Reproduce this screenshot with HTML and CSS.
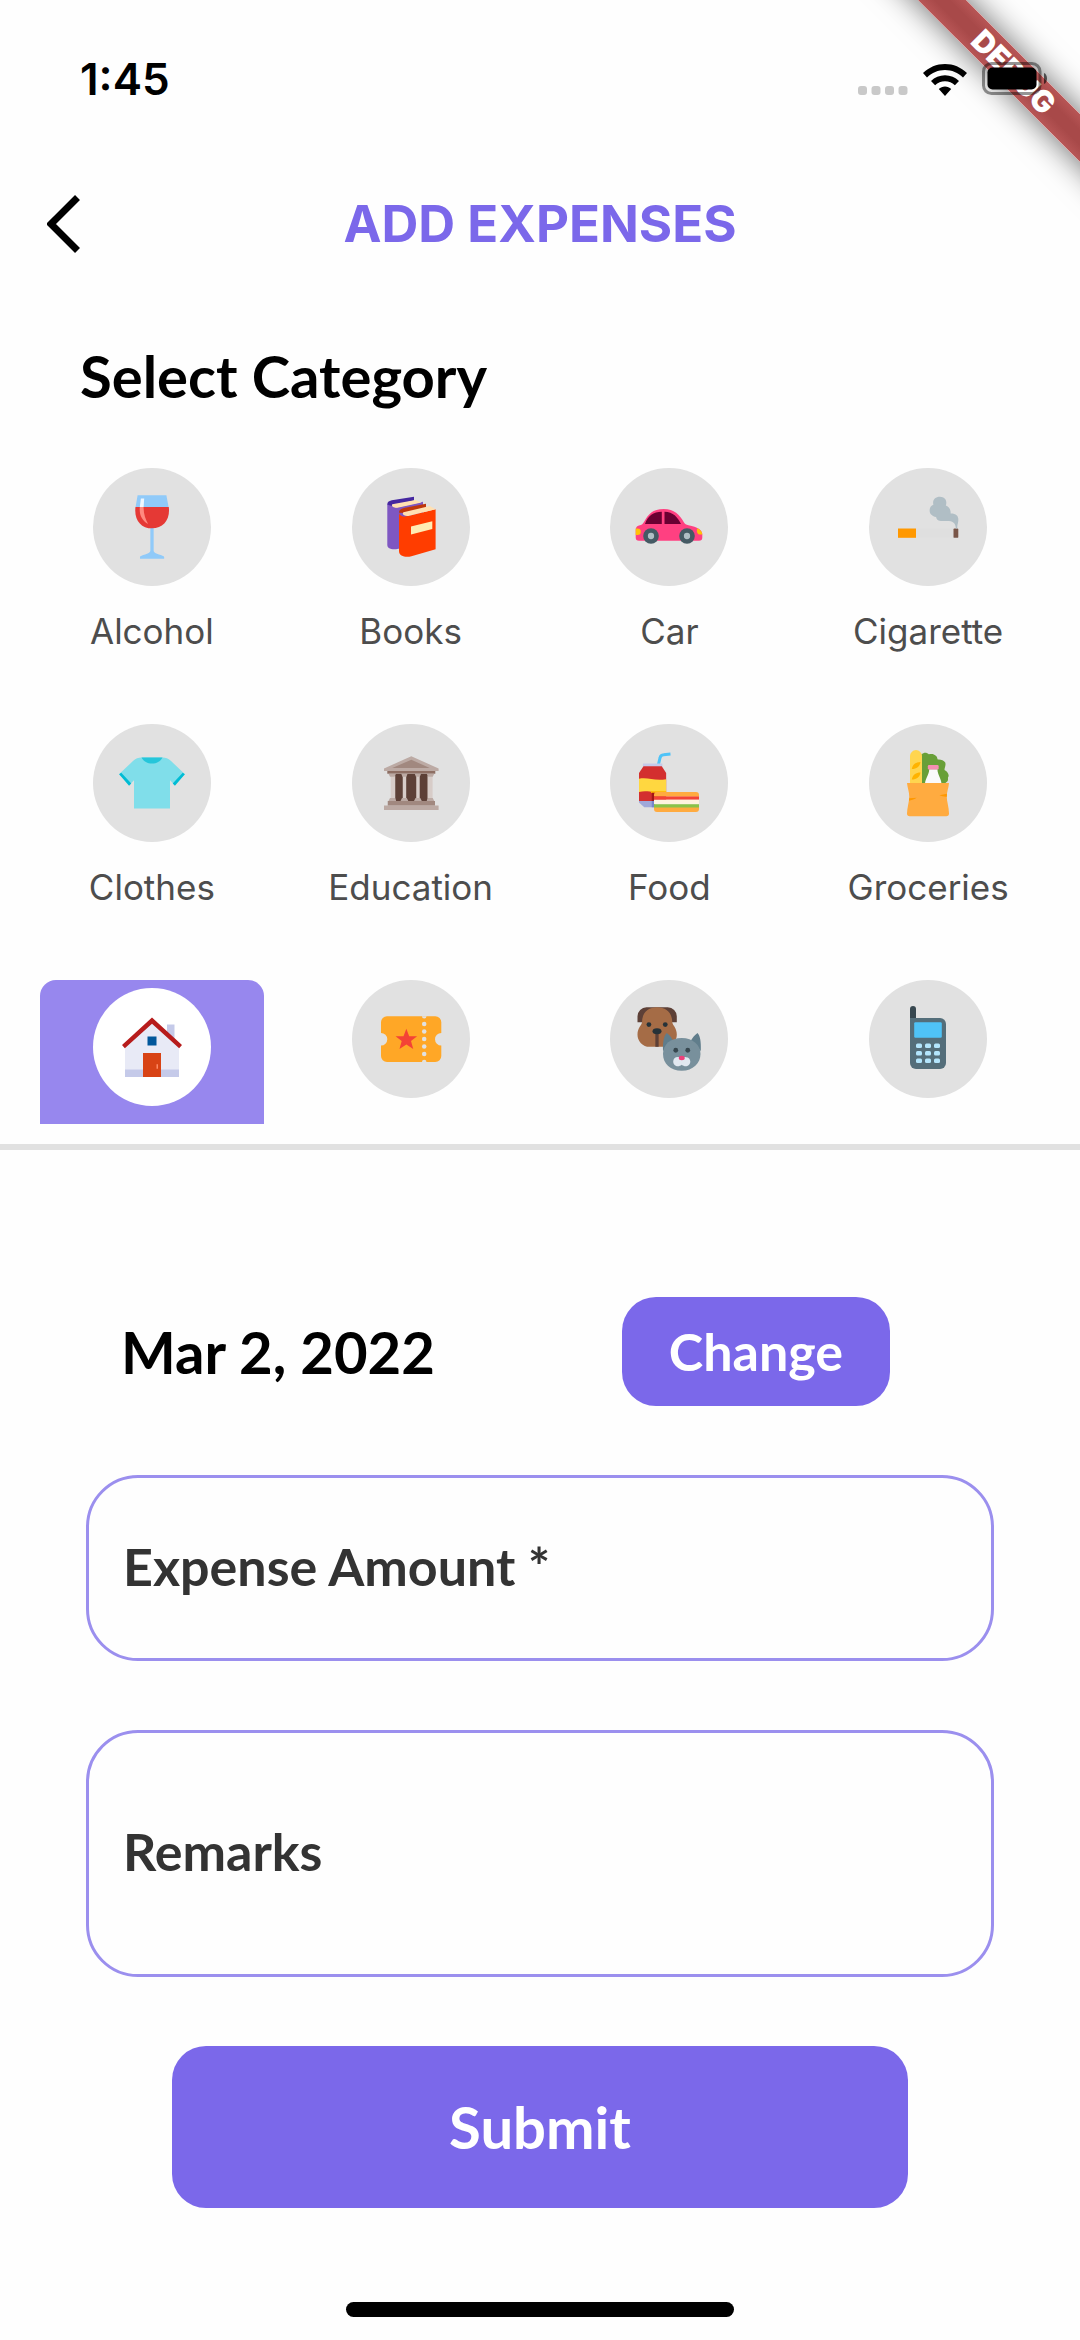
FILE: index.html
```html
<!DOCTYPE html>
<html lang="en">
<head>
<meta charset="utf-8">
<meta name="viewport" content="width=device-width, initial-scale=1">
<title>Add Expenses</title>
<link rel="stylesheet" href="styles.css">
</head>
<body>
<div class="ribbon-corner" aria-hidden="true"><div class="ribbon">DEBUG</div></div>

<div class="status">
  <span class="clock">1:45</span>
  <div class="status-icons">
    <svg class="signal" viewBox="0 0 50 10" aria-hidden="true"><g fill="#c9c9c9"><rect width="9" height="9" rx="3"/><rect x="13.500" width="9" height="9" rx="3"/><rect x="27" width="9" height="9" rx="3"/><rect x="40.500" width="9" height="9" rx="3"/></g></svg>
    <svg class="wifi" viewBox="0 0 44 32" aria-hidden="true"><path d="M22 0C13.600 0 6 3.300 0 9l4 4.400C9 8.700 15.200 6 22 6s13 2.700 18 7.400L44 9C38 3.300 30.400 0 22 0ZM22 11.200c-5.400 0-10.300 2.100-14 5.700l4.100 4.400c2.700-2.600 6.100-4.100 9.900-4.100s7.200 1.500 9.900 4.100L36 16.900c-3.700-3.600-8.600-5.700-14-5.700ZM22 22.600c-2.400 0-4.500.9-6.200 2.400L22 32l6.200-7c-1.700-1.500-3.800-2.400-6.200-2.400Z"/></svg>
    <svg class="battery" viewBox="0 0 67 34" aria-hidden="true"><rect x="1.500" y="1.500" width="56.500" height="30" rx="8" fill="none" stroke="#000" stroke-opacity=".42" stroke-width="3"/><rect x="5.500" y="5.500" width="49" height="22" rx="5"/><path d="M62 11c4 1.500 4 9.500 0 11Z" fill-opacity=".6"/></svg>
  </div>
</div>

<header class="topbar">
  <button class="back" type="button" aria-label="Back"><svg viewBox="0 0 33 58" aria-hidden="true"><path d="M30.500 2.500 4 29l26.500 26.500" fill="none" stroke="#000" stroke-width="7"/></svg></button>
  <h1>ADD EXPENSES</h1>
</header>

<main>
  <h2>Select Category</h2>
  <div class="categories">
    <button class="tile" type="button"><span class="disc"><svg viewBox="0 0 48 48"><path fill="#90CAF9" d="M14.400 2.900h19.200L35.100 11H13ZM22.900 24h2.200v16c0 2 7 2.800 7 4v1.200H16V44c0-1.200 6.900-2 6.900-4Z"/><path fill="#E53935" d="M13 10.700h22.200C36.300 19 31.500 24.900 24 24.900S11.900 19 13 10.700Z"/><path fill="#fff" opacity=".85" d="M16.600 5h2.200l-.4 5.700h-2.500Z"/><path fill="#ff8a80" d="M15.900 10.700h2.500c-.1 4.600 1.300 8.300 3 11.300-4.400-2.400-6-6.500-5.500-11.300Z"/></svg></span><span class="name">Alcohol</span></button>
    <button class="tile" type="button"><span class="disc"><svg viewBox="0 0 48 48"><path fill="#7E57C2" d="M8.200 8.500 14 11l18-3.800v28L14 38.900c-3 0-5.800-.6-5.800-2.900Z"/><path fill="#4527A0" d="M8.200 9c0-1.600.8-2.200 3-2.800L26 3.900v2.500L11 10Z"/><path fill="#FFE0B2" d="M11.500 8.800 27 6l4 1.600-16 3.600c-2 .3-4.500-1-3.500-2.400Z"/><path fill="#FF3D00" d="M16 14c0 2.500 2.500 3.500 6 2.700l18.400-4.500v26.700L24.300 43.500c-3.500 1-8.300.2-8.300-3.500Z"/><path fill="#BF360C" d="M16 14.500c0-2 1.200-2.600 4-3.300L34 8.500v2.600l-14.500 3.600Z"/><path fill="#FFE0B2" d="M19 14.200 36.500 10l3.900 2.200-18.200 4.400c-2.200.4-4.700-1.200-3.200-2.400Z"/><path fill="#FFECB3" d="m24 23.700 14.200-3.600v5.200L24 29Z"/></svg></span><span class="name">Books</span></button>
    <button class="tile" type="button"><span class="disc"><svg viewBox="0 0 48 48"><path fill="#FF4081" d="M4 23c2-.4 2.600-1 3.500-2.600C10.200 15.600 13 12 20.500 12c7 0 10.500 3.600 13.500 9 .6 1 1.400 1.500 3 1.800 6 1.200 9.200 3.200 9.200 6V31a2.200 2.200 0 0 1-2.200 2.200H4A2.200 2.200 0 0 1 1.800 31v-5c0-1.800.8-2.700 2.200-3Z"/><path fill="#6A0032" d="M8 22c2-5.600 5.500-8.200 11.200-8.200V22ZM21 13.800c5.800.2 8.800 3.500 11 8.200H21Z"/><path fill="#FFC107" d="M1.800 25H3a2.200 2.200 0 0 1 0 4.400H1.800ZM43 24.800c2 1 3.200 2.300 3.200 4.200h-1.600c-1.800 0-2.500-2.400-1.600-4.200Z"/><g fill="#455A64"><circle cx="12" cy="30" r="5.200"/><circle cx="36" cy="30" r="5.200"/></g><g fill="#B0BEC5"><circle cx="12" cy="30" r="2.100"/><circle cx="36" cy="30" r="2.100"/></g></svg></span><span class="name">Car</span></button>
    <button class="tile" type="button"><span class="disc"><svg viewBox="0 0 48 48"><path fill="#DFDFDF" d="M16 25h25v6H16z"/><path fill="#FF9800" d="M4 25h12v6.200H4z"/><rect x="41" y="25" width="3.200" height="6.200" rx=".6" fill="#795548"/><path fill="#B0BEC5" d="M42.600 25c-.2-3-1.300-4.700-4.600-5-4 0-8 .8-8.600-2.700-2.700-.4-4.500-2.200-4.300-4.700.1-2 1.100-3 2.500-3.500C26.700 6 29 3.800 32 3.900c3.300.1 5 2.600 3.900 5.800 2 .9 3.300 2.300 3.200 5.300 4 0 5.300 2 5.100 4.500-.1 2.300-.7 2.500-.7 5.500Z"/></svg></span><span class="name">Cigarette</span></button>

    <button class="tile" type="button"><span class="disc"><svg viewBox="0 0 48 48"><path fill="#80DEEA" d="M17 7h14c2.300 0 3.700.7 5.500 2.200l9.500 9-7 7-3-3V41H12V22.200l-3 3-7-7 9.500-9C13.300 7.700 14.700 7 17 7Z"/><path fill="#00BCD4" d="m3.500 17.200 6.700 7.200-1.500 1.500-6.600-7.700ZM44.500 17.200l-6.700 7.200 1.500 1.500 6.600-7.700Z"/><path fill="#26C6DA" d="M17 7h14c-1.500 2.800-4 4-7 4s-5.500-1.200-7-4Z"/></svg></span><span class="name">Clothes</span></button>
    <button class="tile" type="button"><span class="disc"><svg viewBox="0 0 48 48"><path fill="#5D4037" d="M12 18h24v18H12z"/><path fill="#BCAAA4" d="M6 42v-3h36.400v3ZM6 14.300 24.200 6.200l18.200 8.100V16H6Z"/><path fill="#A1887F" d="M8.500 36H40v3H8.500ZM24.200 8.500 36.500 14h-25Z"/><path fill="#8D6E63" d="M8.200 16h32v1.900h-32z"/><path fill="#D7CCC8" d="M10.500 19h3v15h-3ZM18.500 19h2.300v15h-2.300ZM27.500 19h2.300v15h-2.300ZM35 19h3.400v15H35Z"/><path fill="#BCAAA4" d="M9 17.900h5l-1 2h-3ZM17.500 17.900h4.200l-.8 2h-2.600ZM26.500 17.900h4.200l-.8 2h-2.600ZM34.500 17.900h5l-1 2h-3ZM9 36l1-2h3.600l.5 2ZM17 36l1-2h3.200l1 2ZM26 36l1-2h3.200l1 2ZM34.500 36l.5-2h3.500l1 2Z"/></svg></span><span class="name">Education</span></button>
    <button class="tile" type="button"><span class="disc"><svg viewBox="0 0 48 48"><path fill="none" stroke="#4FC3F7" stroke-width="2" d="m17 11.500 1-4.200c.3-1.500 1-2 2.400-2.100L25 4.700"/><path fill="#C5CAE9" d="M6.600 11h13v2.200h-13z"/><path fill="#D32F2F" d="M7 12.800h12.200l2.900 4.600V36H4V17.400Z"/><path fill="#FFD740" d="M4 21.200c6-1.400 10 1.800 18.100.3V30H4Z"/><path fill="#D32F2F" d="M4 30c3.500-1 7-.4 10.200.2v6H4Z"/><path fill="#9FA8DA" d="M4 36h10.200v4.200H7.500L4 37Z"/><path fill="#FFB300" d="M12 29.500h10.100v1.200H12z"/><path fill="#A31515" d="M12.500 30.500h2V36h-2z"/><path fill="#7986CB" d="M12.500 36h2v4.200h-2z"/><path fill="#FFAB40" d="M14 33v-1a2 2 0 0 1 2-2h26a2 2 0 0 1 2 2v1.200ZM14 40h30v1.300a2 2 0 0 1-2 2H16a2 2 0 0 1-2-2Z"/><path fill="#F44336" d="M14 33h30v2.100H14z"/><path fill="#FFF3E0" d="M14 35.100h30v3.100H14z"/><path fill="#8BC34A" d="M14 38.200h30v2.200H14z"/></svg></span><span class="name">Food</span></button>
    <button class="tile" type="button"><span class="disc"><svg viewBox="0 0 48 48"><path fill="#689F38" d="M19.500 5c2-1.500 3.500-1.400 5-.1 2-.6 3.500-.3 4.500.8 1 .5 1 1.500 1.500 2.600 2-.2 4 .5 5 2 .6 2-.5 3.500-.5 5 2 1 2.700 2.500 2.800 4-1 1.500 0 2-.8 3.500L34.500 25h-15Z"/><path fill="#FFD54F" d="M12 25V6c0-2 2-4 4-4s4 2 4 4v19Z"/><path fill="#FFB300" d="M13.200 14.700c.5-3 2.700-4.700 5.800-4.700-.3 3-3 4.800-5.800 4.700ZM13.200 21.700c.5-3 2.700-4.700 5.800-4.700-.3 3-3 4.800-5.800 4.700Z"/><path fill="#FAFAFA" d="M24.800 14.800h5.500c0 3.700 2.500 6 2.700 9.700H22c.2-3.700 2.800-6 2.800-9.700Z"/><rect x="23.900" y="12" width="7.200" height="3" rx=".8" fill="#F48FB1"/><path fill="#FFAB40" d="M10 24h28c-.3 3.500-1.500 6-1.500 9 0 3.500 1.500 7 1.500 11.400a1.800 1.800 0 0 1-1.800 1.800H11.800a1.800 1.800 0 0 1-1.800-1.800c0-3.500 1.500-7.900 1.500-11.400S10.300 27.500 10 24Z"/><path fill="#FF9800" d="m11.500 34.100 5-.2c-2 1.500-3.500 1.500-5.200 2ZM36.600 31.200l-5 1c1.500.7 3.500 1 5 .9Z"/></svg></span><span class="name">Groceries</span></button>

    <button class="tile selected" type="button" aria-pressed="true"><span class="disc"><svg viewBox="0 0 48 48"><path fill="#C5CAE9" d="M34 9h5v15h-5z"/><path fill="#E8EAF6" d="M24 5.500 42 22v22H6V22Z"/><path fill="#C5CAE9" d="M6 39h36v5H6z"/><path fill="#B71C1C" d="M24 4.300 4 22.700l1.900 2.200L24 8.500l18.100 16.400 1.900-2.200Z"/><path fill="#D84315" d="M18 28h12v16H18z"/><path fill="#01579B" d="M21 17h6v6h-6z"/><path fill="#FF8A65" d="M27 35.500h1v3h-1z"/></svg></span><span class="name">Home</span></button>
    <button class="tile" type="button" aria-label="Movies"><span class="disc"><svg viewBox="0 0 48 48"><path fill="#FFA726" d="M8 8.800h32.200a4 4 0 0 1 4 4V20a4.200 4.200 0 0 0 0 8.400v7a4 4 0 0 1-4 4H8a4 4 0 0 1-4-4v-7A4.200 4.200 0 0 0 4 20v-7.200a4 4 0 0 1 4-4Z"/><path fill="#F44336" d="m20.900 17.200 1.900 5h5.300L24 25.400l1.500 5.300-4.600-3.100-4.600 3.100 1.500-5.300-4.100-3.200H19Z"/><g fill="#E1E1E1"><path d="M31.300 8.800h3a1.500 1.500 0 0 1-3 0ZM31.300 39.400h3a1.500 1.500 0 0 0-3 0Z"/><circle cx="32.800" cy="14" r="1.500"/><circle cx="32.800" cy="19" r="1.500"/><circle cx="32.800" cy="24" r="1.500"/><circle cx="32.800" cy="29" r="1.500"/><circle cx="32.800" cy="34" r="1.500"/></g></svg></span></button>
    <button class="tile" type="button" aria-label="Pets"><span class="disc"><svg viewBox="0 0 48 48"><path fill="#5D4037" d="M9 2.900h14.200a6 6 0 0 1 6 6v3.900H3V8.900a6 6 0 0 1 6-6Z"/><path fill="#A56C46" d="M6 13C6 6.500 10 2.900 16 2.900S26.200 6.500 26.200 13c.5 2.300 3 3.700 3 8a8 8 0 0 1-8 8.200H11A8 8 0 0 1 3 21c0-4.300 2.500-5.700 3-8Z"/><path fill="#5D4037" d="M14.900 20h2.200v9.200h-2.200z"/><g fill="#263238"><ellipse cx="16" cy="18.800" rx="3" ry="2"/><circle cx="10.600" cy="14.400" r="1.600"/><circle cx="21.500" cy="14.400" r="1.600"/></g><path fill="#607D8B" d="M20 32c-.2-6 .5-10 2.500-12 2 1.200 3.500 3.500 4.500 6ZM45.200 32c.2-6-.3-10-2.200-12-2 1.500-3.200 3-4.700 5.500Z"/><path fill="#78909C" d="M32.500 23.300C40 23.300 45 28 45 34s-5 11.200-12.500 11.200S20 40.500 20 34s5-10.700 12.500-10.700Z"/><g fill="#37474F"><circle cx="28.500" cy="31.500" r="1.600"/><circle cx="36.500" cy="31.500" r="1.600"/></g><path fill="#E1E8F0" d="M29.800 36c1.500 0 5 0 5.500.1 1.800 0 2.900 1.400 2.900 2.900 0 3-3.400 4.200-5.700 2.200-2.300 2-5.700.8-5.700-2.200 0-1.700 1.200-3 3-3Z"/><ellipse cx="32.500" cy="36.700" rx="2" ry="1.500" fill="#EC407A"/></svg></span></button>
    <button class="tile" type="button" aria-label="Phone"><span class="disc"><svg viewBox="0 0 48 48"><path fill="#37474F" d="M12 14V4a2 2 0 0 1 4 0v10Z"/><path fill="#546E7A" d="M12 10h20a4 4 0 0 1 4 4v26a4 4 0 0 1-4 4H16a4 4 0 0 1-4-4Z"/><rect x="14.800" y="12.800" width="18.400" height="10.300" rx=".8" fill="#4FC3F7"/><g fill="#B3E5FC"><rect x="16" y="27" width="4" height="3" rx="1"/><rect x="22" y="27" width="4" height="3" rx="1"/><rect x="28" y="27" width="4" height="3" rx="1"/><rect x="16" y="32" width="4" height="3" rx="1"/><rect x="22" y="32" width="4" height="3" rx="1"/><rect x="28" y="32" width="4" height="3" rx="1"/><rect x="16" y="37" width="4" height="3" rx="1"/><rect x="22" y="37" width="4" height="3" rx="1"/><rect x="28" y="37" width="4" height="3" rx="1"/></g></svg></span></button>
  </div>

  <form class="entry">
    <div class="date-row">
      <time datetime="2022-03-02">Mar 2, 2022</time>
      <button class="change" type="button">Change</button>
    </div>
    <input class="field" type="text" inputmode="decimal" aria-label="Expense Amount" placeholder="Expense Amount *">
    <input class="field tall" type="text" aria-label="Remarks" placeholder="Remarks">
    <button class="submit" type="button">Submit</button>
  </form>
</main>
<div class="home-bar"></div>
</body>
</html>
```
FILE: styles.css
```css
:root {
  --violet: #7b68ea;
  --violet-soft: #9787ee;
  --grey: #e1e1e1;
}

* {
  box-sizing: border-box;
}

body {
  position: relative;
  display: flex;
  flex-direction: column;
  min-height: 100vh;
  margin: 0;
  background: #fefefe;
  color: #000;
  font-family: Inter, "Liberation Sans", sans-serif;
}

button {
  padding: 0;
  border: 0;
  background: none;
  color: inherit;
  font: inherit;
}

svg {
  display: block;
}

.ribbon-corner {
  position: absolute;
  top: 0;
  right: 0;
  width: 240px;
  height: 240px;
  overflow: hidden;
}

.ribbon {
  position: absolute;
  top: 52px;
  right: -131px;
  width: 400px;
  height: 34px;
  padding-left: 8px;
  background: linear-gradient(#b85656, #a84949 35%, #a84949 65%, #b85656);
  box-shadow: 0 0 32px rgba(0, 0, 0, 0.6);
  color: #fff;
  font-size: 30px;
  font-weight: 900;
  line-height: 34px;
  text-align: center;
  transform: rotate(45deg);
}

.status {
  position: relative;
  display: flex;
  align-items: center;
  justify-content: space-between;
  height: 158px;
  padding: 0 31px 0 80px;
}

.clock {
  font-size: 44px;
  font-weight: 600;
}

.status-icons {
  display: flex;
  align-items: flex-end;
  gap: 15px;
}

.signal {
  width: 50px;
  height: 10px;
}

.wifi {
  width: 44px;
  height: 32px;
}

.battery {
  width: 67px;
  height: 34px;
}

.topbar {
  display: grid;
  grid-template-columns: 80px 1fr 80px;
  align-items: center;
  height: 132px;
}

.back {
  padding-left: 47px;
}

.back svg {
  width: 33px;
  height: 58px;
}

h1 {
  margin: 0;
  color: var(--violet);
  font-size: 51px;
  font-weight: 700;
  line-height: 64px;
  text-align: center;
}

main {
  display: flex;
  flex: 1;
  flex-direction: column;
}

h2,
time {
  margin: 0;
  font-family: Lato, sans-serif;
  font-size: 58px;
  font-weight: 700;
  line-height: 72px;
}

h2 {
  padding: 50px 80px 56px;
}

.categories {
  display: grid;
  grid-template-columns: repeat(4, 1fr);
  grid-auto-rows: 220px;
  gap: 36px 35px;
  height: 656px;
  margin: 0 40px;
  overflow: hidden;
}

.tile {
  display: flex;
  flex-direction: column;
  align-items: center;
  gap: 24px;
  border-radius: 16px;
  color: #4d4d4d;
  font-size: 35px;
  line-height: 42px;
}

.disc {
  display: grid;
  place-items: center;
  width: 118px;
  height: 118px;
  border-radius: 50%;
  background: var(--grey);
}

.disc svg {
  width: 72px;
  height: 72px;
}

.selected {
  gap: 10px;
  padding-top: 8px;
  background: var(--violet-soft);
  color: #fff;
}

.selected .disc {
  background: #fff;
}

.entry {
  display: flex;
  flex-direction: column;
  gap: 69px;
  margin-top: 20px;
  padding: 147px 86px 0;
  border-top: 6px solid var(--grey);
  font-family: Lato, sans-serif;
}

.date-row {
  display: flex;
  align-items: center;
  justify-content: space-between;
  padding: 0 104px 0 35px;
}

.change,
.submit {
  border-radius: 34px;
  background: var(--violet);
  color: #fff;
  font-weight: 700;
}

.change {
  padding: 22px 47px 23px;
  font-size: 52px;
  line-height: 64px;
}

.field {
  width: 100%;
  padding: 58px 34px 62px;
  border: 3px solid #9b8fee;
  border-radius: 52px;
  background: transparent;
  color: #333;
  font: 700 52px/60px Lato, sans-serif;
  outline: none;
}

.field::placeholder {
  color: #333;
  opacity: 1;
}

.tall {
  padding: 88px 34px 93px;
}

.submit {
  margin: 0 86px;
  padding: 45px;
  font-size: 58px;
  line-height: 72px;
}

.home-bar {
  align-self: center;
  width: 36%;
  height: 15px;
  margin-bottom: 23px;
  border-radius: 8px;
  background: #000;
}
```
